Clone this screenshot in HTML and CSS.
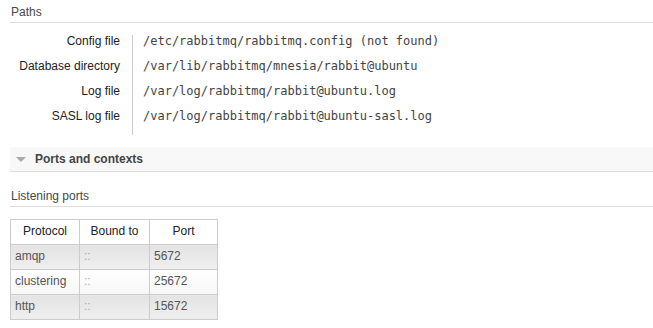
FILE: index.html
```html
<!DOCTYPE html>
<html lang="en">
  <head>
    <meta charset="UTF-8" />
    <meta name="viewport" content="width=device-width, initial-scale=1.0" />
    <title>Node overview</title>
    <link rel="stylesheet" href="styles.css">
  </head>
  <body>
    <div class="main">
      <h3 class="first">Paths</h3>
      <table class="facts">
        <tr>
          <th>Config file</th>
          <td><code>/etc/rabbitmq/rabbitmq.config (not found)</code></td>
        </tr>
        <tr>
          <th>Database directory</th>
          <td><code>/var/lib/rabbitmq/mnesia/rabbit@ubuntu</code></td>
        </tr>
        <tr>
          <th>Log file</th>
          <td><code>/var/log/rabbitmq/rabbit@ubuntu.log</code></td>
        </tr>
        <tr>
          <th>SASL log file</th>
          <td><code>/var/log/rabbitmq/rabbit@ubuntu-sasl.log</code></td>
        </tr>
      </table>

      <div class="section">
        <h2 class="toggle"><span class="arrow"></span>Ports and contexts</h2>
        <h3>Listening ports</h3>
        <table class="list">
          <tr>
            <th>Protocol</th>
            <th>Bound to</th>
            <th>Port</th>
          </tr>
          <tr class="alt1">
            <td>amqp</td>
            <td class="dim">::</td>
            <td>5672</td>
          </tr>
          <tr class="alt2">
            <td>clustering</td>
            <td class="dim">::</td>
            <td>25672</td>
          </tr>
          <tr class="alt1">
            <td>http</td>
            <td class="dim">::</td>
            <td>15672</td>
          </tr>
        </table>
      </div>
    </div>
  </body>
</html>
```

FILE: styles.css
```css
body {
  font-family: "Liberation Sans", Arial, sans-serif;
  font-size: 12px;
  color: #222;
  margin: 0;
  background-color: #fff;
}
.main {
  padding-left: 10px;
}
h3 {
  font-size: 12px;
  font-weight: normal;
  line-height: 14px;
  color: #484848;
  margin: 17px 0 12px;
  padding: 0 0 3px 1px;
  border-bottom: 1px solid #ddd;
}
h3.first {
  margin-top: 5px;
}
table {
  border-collapse: collapse;
  border-spacing: 0;
}
.facts th {
  width: 110px;
  text-align: right;
  font-weight: normal;
  line-height: 12px;
  padding: 0 12px 13px 0;
  vertical-align: top;
  color: #222;
}
.facts td {
  border-left: 1px solid #ccc;
  line-height: 12px;
  padding: 0 0 13px 10px;
  vertical-align: top;
}
code {
  font-family: "DejaVu Sans Mono", monospace;
  font-size: 12px;
  color: #444;
}
.section {
  margin-top: 12px;
}
.toggle {
  margin: 0;
  height: 24px;
  line-height: 24px;
  font-size: 12px;
  font-weight: bold;
  color: #444;
  background-color: #f8f8f8;
  border-bottom: 1px solid #ddd;
}
.arrow {
  display: inline-block;
  width: 0;
  height: 0;
  margin: 0 9px 1px 6px;
  border-left: 5px solid transparent;
  border-right: 5px solid transparent;
  border-top: 5px solid #aaa;
  vertical-align: middle;
}
.list th,
.list td {
  border: 1px solid #ccc;
  line-height: 14px;
  padding: 4px 4px 6px;
  vertical-align: top;
}
.list th {
  font-weight: normal;
  text-align: center;
  color: #222;
  background-color: #fff;
}
.list th:nth-child(1),
.list td:nth-child(1) {
  width: 60px;
}
.list th:nth-child(2),
.list td:nth-child(2) {
  width: 61px;
}
.list th:nth-child(3),
.list td:nth-child(3) {
  width: 59px;
}
.list td {
  color: #555;
}
.list td.dim {
  color: #aaa;
}
.alt1 td {
  background: linear-gradient(#e3e3e3, #efefef);
}
.alt2 td {
  background: linear-gradient(#fff, #f6f6f6);
}
```
